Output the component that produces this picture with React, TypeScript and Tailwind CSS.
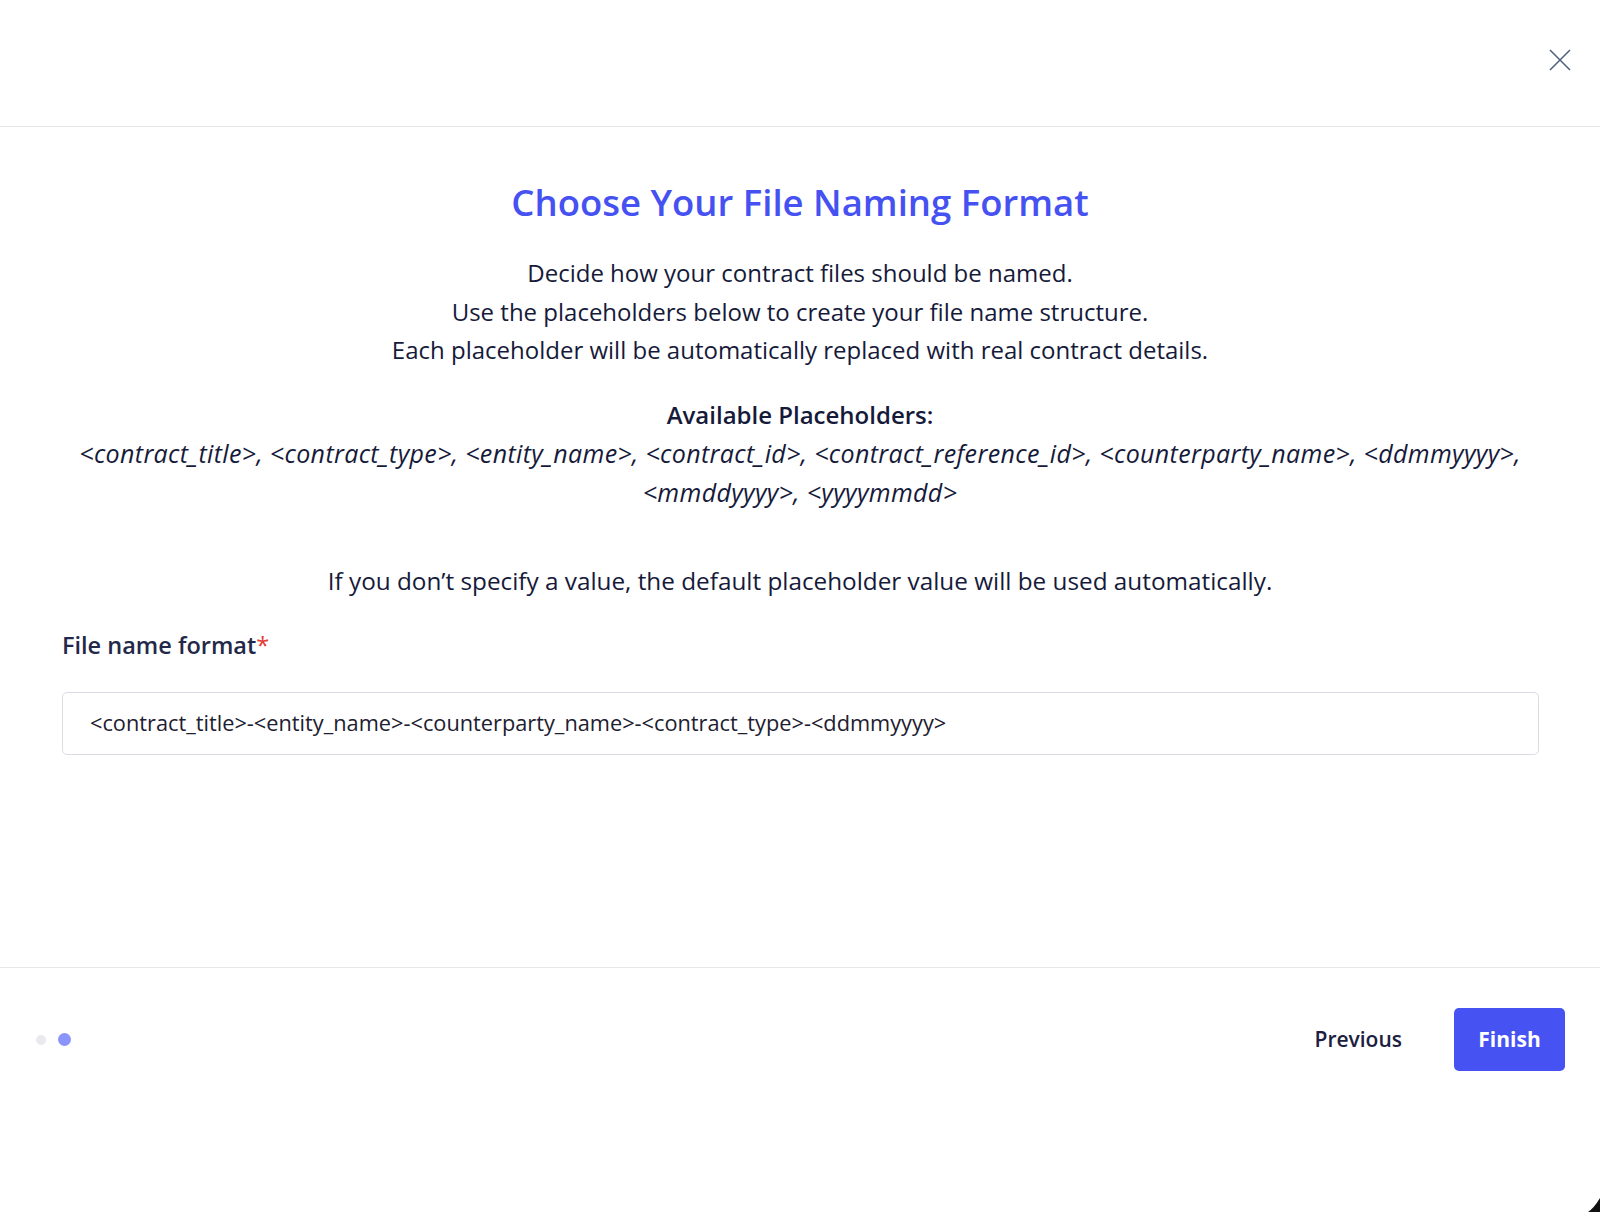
const placeholders = [
  "<contract_title>",
  "<contract_type>",
  "<entity_name>",
  "<contract_id>",
  "<contract_reference_id>",
  "<counterparty_name>",
  "<ddmmyyyy>",
  "<mmddyyyy>",
  "<yyyymmdd>",
];

export default function App() {
  return (
    <div
      className="relative w-[1600px] h-[1212px] bg-white flex flex-col text-[#161a3a] overflow-hidden"
      style={{ fontFamily: "'Open Sans', Lato, sans-serif" }}
    >
      {/* Header */}
      <div className="h-[127px] shrink-0 border-b border-[#e5e7eb] flex items-start justify-end pt-[49px] pr-[29px]">
        <button className="text-[#52657d]">
          <svg width="22" height="22" viewBox="0 0 22 22" fill="none" stroke="currentColor" strokeWidth="1.6">
            <path d="M1 1 L21 21 M21 1 L1 21" />
          </svg>
        </button>
      </div>

      {/* Body */}
      <div className="flex-1 px-[62px] pt-[52px]">
        <h1 className="text-center text-[36.5px] leading-[46px] font-semibold text-[#4651f2]">
          Choose Your File Naming Format
        </h1>

        <div className="mt-[29px] text-center text-[24px] leading-[38.5px]">
          <p>Decide how your contract files should be named.</p>
          <p>Use the placeholders below to create your file name structure.</p>
          <p>Each placeholder will be automatically replaced with real contract details.</p>
        </div>

        <div className="mt-[26px] text-center text-[24px] leading-[38.5px]">
          <p className="font-semibold">Available Placeholders:</p>
          <p className="italic text-[25px] tracking-[0.35px]">{placeholders.join(", ")}</p>
        </div>

        <p className="mt-[51px] text-center text-[24.3px] leading-[38.5px]">
          If you don’t specify a value, the default placeholder value will be used automatically.
        </p>

        <label className="block mt-[27px] text-[23.5px] leading-[34px] font-semibold text-[#23284a]">
          File name format<span className="font-normal text-[#e53935]">*</span>
        </label>

        <div className="mt-[30px] w-[1477px] h-[63px] border border-[#d9dde3] rounded-[5px] flex items-center px-[27px] text-[21.75px] text-[#1d2030]">
          {"<contract_title>-<entity_name>-<counterparty_name>-<contract_type>-<ddmmyyyy>"}
        </div>
      </div>

      {/* Footer */}
      <div className="h-[245px] shrink-0 border-t border-[#e5e7eb] flex items-start justify-between pt-[40px] pl-[36px] pr-[35px]">
        <div className="h-[63px] flex items-center gap-[12px]">
          <span className="w-[10px] h-[10px] rounded-full bg-[#e9eaee]" />
          <span className="w-[13px] h-[13px] rounded-full bg-[#8a94fb]" />
        </div>
        <div className="flex items-center gap-[52px]">
          <button className="text-[21px] font-semibold text-[#1c2040]">Previous</button>
          <button className="w-[111px] h-[63px] rounded-[5px] bg-[#4752f3] text-white text-[21px] font-bold">
            Finish
          </button>
        </div>
      </div>

      <svg className="absolute right-0 bottom-0" width="12" height="14" viewBox="0 0 12 14">
        <path d="M12 0 Q 6 10 0 14 L 12 14 Z" fill="#111" />
      </svg>
    </div>
  );
}
